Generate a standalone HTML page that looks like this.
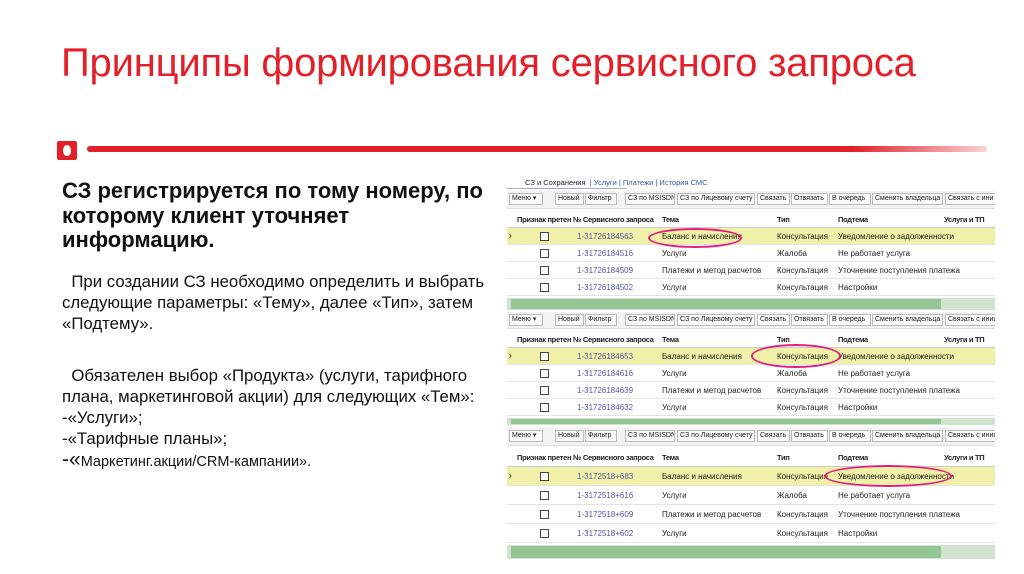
<!DOCTYPE html>
<html><head><meta charset="utf-8"><style>
*{margin:0;padding:0;box-sizing:border-box}
body{width:1024px;height:574px;background:#fff;position:relative;overflow:hidden;font-family:"Liberation Sans","DejaVu Sans",sans-serif}
.a{position:absolute;white-space:nowrap}
h1{position:absolute;left:61px;top:41px;font-weight:normal;font-size:40px;color:#e3202a;letter-spacing:-0.2px;white-space:nowrap}
.txt{position:absolute;left:62px;color:#111;white-space:nowrap}
.p{position:absolute;left:507px;width:488px;font-size:8px;color:#222;overflow:hidden}
.tb{position:absolute;left:0;width:488px;background:#f3f3f3;border-bottom:1px solid #ddd}
.btn{position:absolute;top:2px;height:12px;border:1px solid #bbb;background:#fafafa;font-size:7px;line-height:10px;padding:0 2px;overflow:hidden;white-space:nowrap}
.hd{position:absolute;left:0;width:488px;font-weight:bold;font-size:7.5px;letter-spacing:-0.3px;border-bottom:1px solid #ccc}
.r{position:absolute;left:0;width:488px;border-bottom:1px solid #e3e3e3}
.cb{position:absolute;left:33px;width:9px;height:9px;border:1px solid #444;background:#fff}
.n{color:#5555aa}
.sb{position:absolute;left:0;width:488px;background:#cfe3cf}
.sb i{position:absolute;left:4px;top:1px;bottom:1px;width:430px;background:#93c493;display:block}
.ell{position:absolute;border:2px solid #e0207a;border-radius:50%}
</style></head><body>
<h1>Принципы формирования сервисного запроса</h1>
<div class="a" style="left:57px;top:141px;width:20px;height:19px;background:#e3202a;border-radius:2px"><div style="position:absolute;left:6px;top:4px;width:8px;height:11px;background:#fff;border-radius:50% 50% 45% 45%"></div></div>
<div class="a" style="left:87px;top:146px;width:900px;height:6px;background:linear-gradient(90deg,#e3202a 85%,rgba(227,32,42,0.2));border-radius:3px"></div>

<div class="txt" style="top:179px;font-size:22px;font-weight:bold;line-height:24.5px">СЗ регистрируется по тому номеру, по<br>которому клиент уточняет<br>информацию.</div>
<div class="txt" style="top:271px;font-size:16.8px;line-height:21px">&nbsp;&nbsp;При создании СЗ необходимо определить и выбрать<br>следующие параметры: «Тему», далее «Тип», затем<br>«Подтему».</div>
<div class="txt" style="top:365px;font-size:16.8px;line-height:21px">&nbsp;&nbsp;Обязателен выбор «Продукта» (услуги, тарифного<br>плана, маркетинговой акции) для следующих «Тем»:<br>-«Услуги»;<br>-«Тарифные планы»;<br><span style="font-size:21px">-«</span><span style="font-size:14.5px">Маркетинг.акции/CRM-кампании».</span></div>

<!-- panel 1 -->
<div class="p" style="top:176px;height:136px">
 <div class="a" style="left:18px;top:2px;font-size:7.5px">СЗ и Сохранения&nbsp;&nbsp;<span style="color:#3355aa">| Услуги | Платежи | История СМС</span></div>
 <div class="a" style="left:0;top:12px;width:120px;height:3px;border-top:1px solid #aac"></div>
 <div class="tb" style="top:15px;height:18px">
  <div class="btn" style="left:2px;width:34px">Меню ▾</div><div class="btn" style="left:48px;width:29px">Новый</div><div class="btn" style="left:78px;width:32px">Фильтр</div><div class="btn" style="left:118px;width:50px">СЗ по MSISDN</div><div class="btn" style="left:170px;width:78px">СЗ по Лицевому счету</div><div class="btn" style="left:250px;width:33px">Связать</div><div class="btn" style="left:284px;width:37px">Отвязать</div><div class="btn" style="left:322px;width:42px">В очередь</div><div class="btn" style="left:365px;width:71px">Сменить владельца</div><div class="btn" style="left:438px;width:60px">Связать с ини</div>
 </div>
 <div class="hd" style="top:36px;height:16px"><span class="a" style="left:10px;top:3px">Признак претен № Сервисного запроса</span><span class="a" style="left:155px;top:3px">Тема</span><span class="a" style="left:270px;top:3px">Тип</span><span class="a" style="left:331px;top:3px">Подтема</span><span class="a" style="left:437px;top:3px">Услуги и ТП</span></div>
 <div class="r" style="top:52px;height:17px;background:#f1f0a8"><span class="a" style="left:2px;top:3px;font-weight:bold">›</span><div class="cb" style="top:4px"></div><span class="a n" style="left:70px;top:4px">1-31726184563</span><span class="a" style="left:155px;top:4px">Баланс и начисления</span><span class="a" style="left:270px;top:4px">Консультация</span><span class="a" style="left:331px;top:4px">Уведомление о задолженности</span></div>
 <div class="r" style="top:69px;height:17px"><div class="cb" style="top:4px"></div><span class="a n" style="left:70px;top:4px">1-31726184516</span><span class="a" style="left:155px;top:4px">Услуги</span><span class="a" style="left:270px;top:4px">Жалоба</span><span class="a" style="left:331px;top:4px">Не работает услуга</span></div>
 <div class="r" style="top:86px;height:17px"><div class="cb" style="top:4px"></div><span class="a n" style="left:70px;top:4px">1-31726184509</span><span class="a" style="left:155px;top:4px">Платежи и метод расчетов</span><span class="a" style="left:270px;top:4px">Консультация</span><span class="a" style="left:331px;top:4px">Уточнение поступления платежа</span></div>
 <div class="r" style="top:103px;height:17px"><div class="cb" style="top:4px"></div><span class="a n" style="left:70px;top:4px">1-31726184502</span><span class="a" style="left:155px;top:4px">Услуги</span><span class="a" style="left:270px;top:4px">Консультация</span><span class="a" style="left:331px;top:4px">Настройки</span></div>
 <div class="sb" style="top:122px;height:12px"><i></i></div>
</div>
<div class="ell" style="left:648px;top:228px;width:94px;height:20px"></div>

<!-- panel 2 -->
<div class="p" style="top:312px;height:114px">
 <div class="tb" style="top:0;height:17px">
  <div class="btn" style="left:2px;width:34px">Меню ▾</div><div class="btn" style="left:48px;width:29px">Новый</div><div class="btn" style="left:78px;width:32px">Фильтр</div><div class="btn" style="left:118px;width:50px">СЗ по MSISDN</div><div class="btn" style="left:170px;width:78px">СЗ по Лицевому счету</div><div class="btn" style="left:250px;width:33px">Связать</div><div class="btn" style="left:284px;width:37px">Отвязать</div><div class="btn" style="left:322px;width:42px">В очередь</div><div class="btn" style="left:365px;width:71px">Сменить владельца</div><div class="btn" style="left:438px;width:60px">Связать с иници</div>
 </div>
 <div class="hd" style="top:20px;height:16px"><span class="a" style="left:10px;top:3px">Признак претен № Сервисного запроса</span><span class="a" style="left:155px;top:3px">Тема</span><span class="a" style="left:270px;top:3px">Тип</span><span class="a" style="left:331px;top:3px">Подтема</span><span class="a" style="left:437px;top:3px">Услуги и ТП</span></div>
 <div class="r" style="top:36px;height:17px;background:#f1f0a8"><span class="a" style="left:2px;top:3px;font-weight:bold">›</span><div class="cb" style="top:4px"></div><span class="a n" style="left:70px;top:4px">1-31726184653</span><span class="a" style="left:155px;top:4px">Баланс и начисления</span><span class="a" style="left:270px;top:4px">Консультация</span><span class="a" style="left:331px;top:4px">Уведомление о задолженности</span></div>
 <div class="r" style="top:53px;height:17px"><div class="cb" style="top:4px"></div><span class="a n" style="left:70px;top:4px">1-31726184616</span><span class="a" style="left:155px;top:4px">Услуги</span><span class="a" style="left:270px;top:4px">Жалоба</span><span class="a" style="left:331px;top:4px">Не работает услуга</span></div>
 <div class="r" style="top:70px;height:17px"><div class="cb" style="top:4px"></div><span class="a n" style="left:70px;top:4px">1-31726184639</span><span class="a" style="left:155px;top:4px">Платежи и метод расчетов</span><span class="a" style="left:270px;top:4px">Консультация</span><span class="a" style="left:331px;top:4px">Уточнение поступления платежа</span></div>
 <div class="r" style="top:87px;height:17px"><div class="cb" style="top:4px"></div><span class="a n" style="left:70px;top:4px">1-31726184632</span><span class="a" style="left:155px;top:4px">Услуги</span><span class="a" style="left:270px;top:4px">Консультация</span><span class="a" style="left:331px;top:4px">Настройки</span></div>
 <div class="sb" style="top:106px;height:7px"><i></i></div>
</div>
<div class="ell" style="left:751px;top:344px;width:90px;height:24px"></div>

<!-- panel 3 -->
<div class="p" style="top:427px;height:140px">
 <div class="tb" style="top:0;height:19px">
  <div class="btn" style="left:2px;top:3px;width:34px">Меню ▾</div><div class="btn" style="left:48px;top:3px;width:29px">Новый</div><div class="btn" style="left:78px;top:3px;width:32px">Фильтр</div><div class="btn" style="left:118px;top:3px;width:50px">СЗ по MSISDN</div><div class="btn" style="left:170px;top:3px;width:78px">СЗ по Лицевому счету</div><div class="btn" style="left:250px;top:3px;width:33px">Связать</div><div class="btn" style="left:284px;top:3px;width:37px">Отвязать</div><div class="btn" style="left:322px;top:3px;width:42px">В очередь</div><div class="btn" style="left:365px;top:3px;width:71px">Сменить владельца</div><div class="btn" style="left:438px;top:3px;width:60px">Связать с иници</div>
 </div>
 <div class="hd" style="top:22px;height:18px"><span class="a" style="left:10px;top:4px">Признак претен № Сервисного запроса</span><span class="a" style="left:155px;top:4px">Тема</span><span class="a" style="left:270px;top:4px">Тип</span><span class="a" style="left:331px;top:4px">Подтема</span><span class="a" style="left:437px;top:4px">Услуги и ТП</span></div>
 <div class="r" style="top:40px;height:19px;background:#f1f0a8"><span class="a" style="left:2px;top:4px;font-weight:bold">›</span><div class="cb" style="top:5px"></div><span class="a n" style="left:70px;top:5px">1-3172518+683</span><span class="a" style="left:155px;top:5px">Баланс и начисления</span><span class="a" style="left:270px;top:5px">Консультация</span><span class="a" style="left:331px;top:5px">Уведомление о задолженности</span></div>
 <div class="r" style="top:59px;height:19px"><div class="cb" style="top:5px"></div><span class="a n" style="left:70px;top:5px">1-3172518+616</span><span class="a" style="left:155px;top:5px">Услуги</span><span class="a" style="left:270px;top:5px">Жалоба</span><span class="a" style="left:331px;top:5px">Не работает услуга</span></div>
 <div class="r" style="top:78px;height:19px"><div class="cb" style="top:5px"></div><span class="a n" style="left:70px;top:5px">1-3172518+609</span><span class="a" style="left:155px;top:5px">Платежи и метод расчетов</span><span class="a" style="left:270px;top:5px">Консультация</span><span class="a" style="left:331px;top:5px">Уточнение поступления платежа</span></div>
 <div class="r" style="top:97px;height:19px"><div class="cb" style="top:5px"></div><span class="a n" style="left:70px;top:5px">1-3172518+602</span><span class="a" style="left:155px;top:5px">Услуги</span><span class="a" style="left:270px;top:5px">Консультация</span><span class="a" style="left:331px;top:5px">Настройки</span></div>
 <div class="sb" style="top:118px;height:14px"><i></i></div>
</div>
<div class="ell" style="left:824px;top:465px;width:128px;height:22px"></div>
</body></html>
